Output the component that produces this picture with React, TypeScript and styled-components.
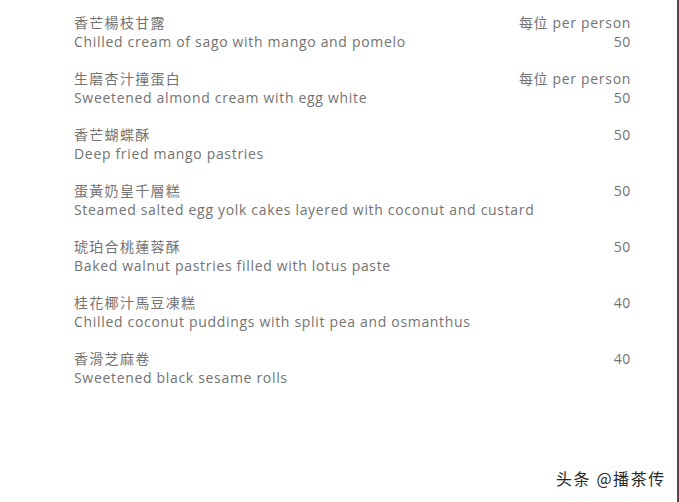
import React from "react";
import styled, { createGlobalStyle } from "styled-components";

const Global = createGlobalStyle`
  html, body { margin: 0; padding: 0; background: #ffffff; }
  #root { width: 679px; }
`;

const Page = styled.div`
  position: relative;
  box-sizing: border-box;
  width: 679px;
  height: 502px;
  background: #fff;
  border-right: 2px solid #4a4a4a;
  padding: 13px 0 0 74px;
  overflow: hidden;
`;

const Menu = styled.div`
  width: 557px;
  display: flex;
  flex-direction: column;
  gap: 18px;
`;

const Row = styled.div`
  display: flex;
  justify-content: space-between;
  color: #737373;
`;

const Col = styled.div<{ $right?: boolean }>`
  display: flex;
  flex-direction: column;
  align-items: ${(p) => (p.$right ? "flex-end" : "flex-start")};
`;

const Zh = styled.div`
  height: 19px;
  line-height: 19px;
  font-family: "Noto Sans CJK TC", "Noto Sans CJK SC", sans-serif;
  font-size: 14px;
  letter-spacing: 1.3px;
  white-space: nowrap;
`;

const En = styled.div`
  height: 19px;
  line-height: 19px;
  font-family: "Open Sans", "Noto Sans CJK TC", sans-serif;
  font-size: 14px;
  letter-spacing: 0.68px;
  white-space: nowrap;
`;

const Watermark = styled.div`
  position: absolute;
  left: 556px;
  top: 468px;
  font-family: "Noto Sans CJK SC", sans-serif;
  font-size: 16px;
  line-height: 20px;
  color: #262626;
  letter-spacing: 1.6px;
  text-shadow: 0 0 2px #fff;
  white-space: nowrap;
`;

type Item = { zh: string; en: string; perPerson?: boolean; price: string };

const items: Item[] = [
  { zh: "香芒楊枝甘露", en: "Chilled cream of sago with mango and pomelo", perPerson: true, price: "50" },
  { zh: "生磨杏汁撞蛋白", en: "Sweetened almond cream with egg white", perPerson: true, price: "50" },
  { zh: "香芒蝴蝶酥", en: "Deep fried mango pastries", price: "50" },
  { zh: "蛋黃奶皇千層糕", en: "Steamed salted egg yolk cakes layered with coconut and custard", price: "50" },
  { zh: "琥珀合桃蓮蓉酥", en: "Baked walnut pastries filled with lotus paste", price: "50" },
  { zh: "桂花椰汁馬豆凍糕", en: "Chilled coconut puddings with split pea and osmanthus", price: "40" },
  { zh: "香滑芝麻卷", en: "Sweetened black sesame rolls", price: "40" },
];

export default function App() {
  return (
    <>
      <Global />
      <Page>
        <Menu>
          {items.map((it) => (
            <Row key={it.zh}>
              <Col>
                <Zh>{it.zh}</Zh>
                <En>{it.en}</En>
              </Col>
              <Col $right>
                {it.perPerson && <En>每位 per person</En>}
                <En>{it.price}</En>
              </Col>
            </Row>
          ))}
        </Menu>
        <Watermark>头条 @播茶传</Watermark>
      </Page>
    </>
  );
}
